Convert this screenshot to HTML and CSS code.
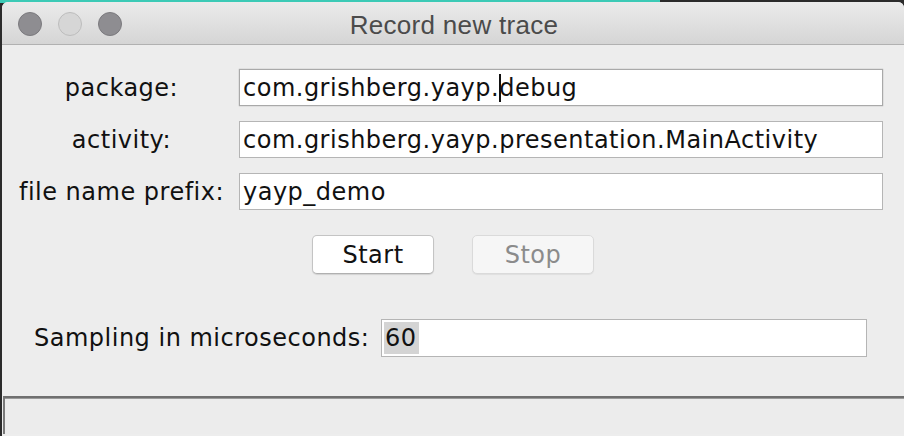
FILE: index.html
```html
<!DOCTYPE html>
<html>
<head>
<meta charset="utf-8">
<link rel="stylesheet" href="styles.css">
</head>
<body>
<div class="window">
  <div class="titlebar">
    <div class="lights">
      <span class="light dark"></span>
      <span class="light pale"></span>
      <span class="light dark"></span>
    </div>
    <div class="title">Record new trace</div>
  </div>
  <div class="content">
    <div class="form">
      <label class="lbl">package:</label>
      <div class="field focused">com.grishberg.yayp.<span class="caret"></span>debug</div>
      <label class="lbl">activity:</label>
      <div class="field">com.grishberg.yayp.presentation.MainActivity</div>
      <label class="lbl">file name prefix:</label>
      <div class="field">yayp_demo</div>
    </div>
    <div class="buttons">
      <button class="btn">Start</button>
      <button class="btn disabled">Stop</button>
    </div>
    <div class="sampling">
      <label class="slbl">Sampling in microseconds:</label>
      <div class="field sfield"><span class="sel">60</span></div>
    </div>
  </div>
  <div class="status"></div>
</div>
</body>
</html>
```

FILE: styles.css
```css
html, body {
  margin: 0;
  padding: 0;
  width: 904px;
  height: 436px;
  overflow: hidden;
}
body {
  background:
    linear-gradient(to right, #3ccab6 0, #3ccab6 660px, #2b2b2b 660px) top left / 100% 3px no-repeat,
    #2b2b2b;
  padding: 2px 0 0 2px;
  box-sizing: border-box;
  font-family: "DejaVu Sans", sans-serif;
}
.window {
  width: 902px;
  height: 434px;
  background: #ededed;
  border-radius: 6px 6px 0 0;
  display: flex;
  flex-direction: column;
  overflow: hidden;
}
.titlebar {
  height: 42px;
  flex: none;
  background: linear-gradient(#ebebeb, #d5d5d5);
  border-bottom: 1px solid #b1b1b1;
  display: flex;
  align-items: center;
  position: relative;
}
.lights {
  display: flex;
  gap: 16px;
  padding: 2px 0 0 16px;
}
.light {
  width: 24px;
  height: 24px;
  border-radius: 50%;
  box-sizing: border-box;
}
.light.dark {
  background: #8e8d91;
  border: 1px solid #7b7a7e;
}
.light.pale {
  background: #d6d6d6;
  border: 1px solid #bdbdbd;
}
.title {
  position: absolute;
  left: 0;
  right: 0;
  top: 8px;
  text-align: center;
  font-family: "Liberation Sans", Arial, sans-serif;
  font-size: 26px;
  letter-spacing: 0.3px;
  color: #4b4b4b;
  padding-left: 2px;
}
.content {
  flex: 1;
  padding-top: 24px;
}
.form {
  display: grid;
  grid-template-columns: 237px 644px;
  row-gap: 15px;
  align-items: center;
}
.lbl, .field, .btn, .slbl {
  font-size: 24px;
  letter-spacing: 0.5px;
}
.lbl {
  text-align: center;
  color: #111;
  padding-left: 2px;
}
.field {
  height: 37px;
  box-sizing: border-box;
  background: #fff;
  border: 1px solid #b5b5b5;
  color: #111;
  line-height: 36px;
  padding-left: 3px;
  white-space: nowrap;
}
.field.focused {
  border-color: #a9a9a9;
  box-shadow: 0 0 1px #999;
}
.caret {
  display: inline-block;
  width: 0;
  height: 28px;
  border-left: 2px solid #111;
  vertical-align: -6px;
  margin-right: -2px;
}
.buttons {
  display: flex;
  justify-content: center;
  gap: 38px;
  margin-top: 25px;
}
.btn {
  width: 122px;
  height: 39px;
  border-radius: 5px;
  background: #fff;
  border: 1px solid #c4c4c4;
  border-bottom-color: #b0b0b0;
  box-shadow: 0 1px 1px rgba(0,0,0,0.12);
  font-family: "DejaVu Sans", sans-serif;
  color: #111;
  padding: 0;
}
.btn.disabled {
  background: #f6f6f6;
  border-color: #dadada;
  color: #8b8b8b;
  box-shadow: 0 1px 1px rgba(0,0,0,0.06);
}
.sampling {
  display: flex;
  align-items: center;
  margin-top: 45px;
  padding-left: 32px;
}
.slbl {
  color: #111;
  width: 347px;
  flex: none;
  white-space: nowrap;
}
.sfield {
  width: 486px;
  height: 38px;
  padding-left: 2px;
}
.sel {
  display: inline-block;
  background: #d4d4d4;
  line-height: 32px;
  padding: 0 2px 0 1px;
}
.status {
  height: 36px;
  flex: none;
  margin: 0 0 2px 1px;
  background: #ececec;
  border-top: 2px solid #707070;
  border-left: 2px solid #7a7a7a;
  box-shadow: inset 0 1px 0 #9a9a9a;
}
```
